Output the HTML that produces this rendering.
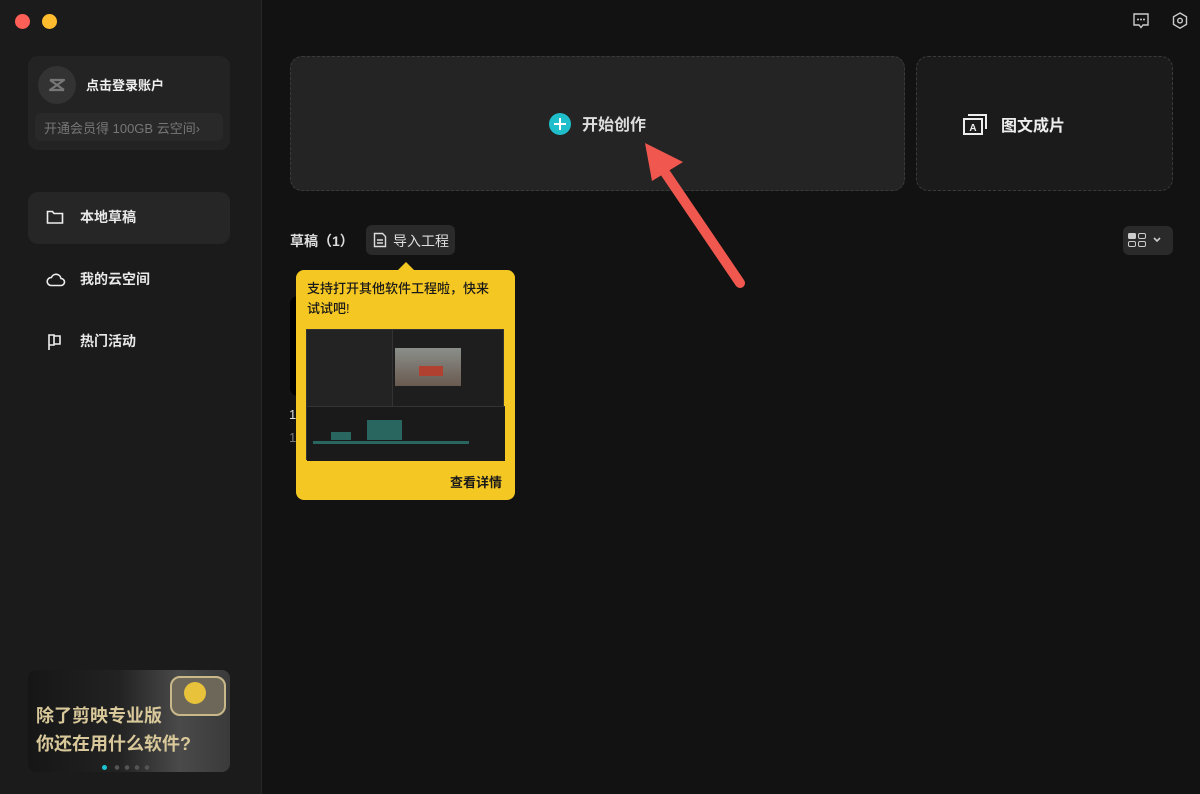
<!DOCTYPE html>
<html><head><meta charset="utf-8">
<style>
*{margin:0;padding:0;box-sizing:border-box}
body{width:1200px;height:794px;background:#121212;font-family:"Liberation Sans","Noto Sans CJK SC",sans-serif;color:#e6e6e6;position:relative;overflow:hidden}
.side{position:absolute;left:0;top:0;width:262px;height:794px;background:#1b1b1b;border-right:1px solid #262626}
.abs{position:absolute}
.dot{position:absolute;width:15px;height:15px;border-radius:50%;top:14px}
.card{position:absolute;left:28px;top:56px;width:202px;height:94px;background:#232323;border-radius:10px}
.nav{position:absolute;left:28px;width:202px;height:52px;border-radius:10px;font-size:14px;font-weight:bold;color:#e8e8e8}
.nav span{position:absolute;left:52px;top:15px}
.nav svg{position:absolute;left:18px;top:17px}
.big{position:absolute;top:56px;height:135px;background:#242424;border:1px dashed #3a3a3a;border-radius:12px;font-size:16px;font-weight:bold}
</style></head><body>
<div class="side">
  <div class="dot" style="left:15px;background:#fe5f57"></div>
  <div class="dot" style="left:42px;background:#febc2e"></div>
  <div class="card">
    <div class="abs" style="left:10px;top:10px;width:38px;height:38px;border-radius:50%;background:#333"></div>
    <svg class="abs" style="left:19px;top:21px" width="20" height="16" viewBox="0 0 20 16"><path d="M3 3h14L3 13h14M3 3l14 10" stroke="#777" stroke-width="2.2" fill="none" stroke-linejoin="round"/></svg>
    <div class="abs" style="left:58px;top:19px;font-size:13px;font-weight:bold;color:#eee">点击登录账户</div>
    <div class="abs" style="left:7px;top:57px;width:188px;height:28px;background:#292929;border-radius:6px;font-size:13px;color:#777;padding:5px 0 0 9px">开通会员得 100GB 云空间›</div>
  </div>
  <div class="nav" style="top:192px;background:#262626">
    <svg width="18" height="16" viewBox="0 0 18 16"><path d="M1.5 2.5h5l1.5 2h8.5v9.5h-15z" stroke="#eee" stroke-width="1.6" fill="none"/></svg><span>本地草稿</span></div>
  <div class="nav" style="top:254px">
    <svg width="20" height="16" viewBox="0 0 20 16"><path d="M5 14.5h10a3.5 3.5 0 0 0 0-7 5 5 0 0 0-9.6-1A4 4 0 0 0 5 14.5z" stroke="#eee" stroke-width="1.6" fill="none"/></svg><span>我的云空间</span></div>
  <div class="nav" style="top:316px">
    <svg width="18" height="18" viewBox="0 0 18 18"><path d="M3 17V2h5v10H3M8 3h6v8H8" stroke="#eee" stroke-width="1.6" fill="none"/></svg><span>热门活动</span></div>
  <div class="abs" style="left:28px;top:670px;width:202px;height:102px;border-radius:8px;background:linear-gradient(90deg,#161616 0%,#222 45%,#4a4a4a 75%,#3a3a3a 100%);overflow:hidden">
    <div class="abs" style="left:142px;top:6px;width:56px;height:40px;border:2px solid #c9b98a;border-radius:10px;background:#6d675a"></div>
    <div class="abs" style="left:156px;top:12px;width:22px;height:22px;border-radius:50%;background:#e8c23a"></div>
    <div class="abs" style="left:8px;top:32px;font-size:18px;font-weight:bold;color:#d8c89a;line-height:28px">除了剪映专业版<br>你还在用什么软件?</div>
    <div class="abs" style="left:74px;top:95px;width:5px;height:5px;border-radius:50%;background:#1cc4d0"></div>
    <div class="abs" style="left:84px;top:95px;width:40px;height:5px;background:radial-gradient(circle,#555 2px,transparent 2.5px) 0 0/10px 5px"></div>
  </div>
</div>

<svg class="abs" style="left:1132px;top:12px" width="18" height="18" viewBox="0 0 18 18"><path d="M2 2h14v11h-5l-2 2.5L7 13H2z" stroke="#ccc" stroke-width="1.4" fill="none"/><circle cx="6" cy="7.5" r="1" fill="#ccc"/><circle cx="9" cy="7.5" r="1" fill="#ccc"/><circle cx="12" cy="7.5" r="1" fill="#ccc"/></svg>
<svg class="abs" style="left:1171px;top:11px" width="18" height="20" viewBox="0 0 18 20"><path d="M9 2l6.5 3.8v7.6L9 17.2 2.5 13.4V5.8z" stroke="#ccc" stroke-width="1.4" fill="none"/><circle cx="9" cy="9.6" r="2.3" stroke="#ccc" stroke-width="1.4" fill="none"/></svg>

<div class="big" style="left:290px;width:615px">
  <div class="abs" style="left:258px;top:56px;width:22px;height:22px;border-radius:50%;background:#1ebfcb"></div>
  <div class="abs" style="left:263px;top:66px;width:12px;height:2px;background:#fff"></div>
  <div class="abs" style="left:268px;top:61px;width:2px;height:12px;background:#fff"></div>
  <div class="abs" style="left:291px;top:54px;color:#ddd">开始创作</div>
</div>
<div class="big" style="left:916px;width:257px;background:#1b1b1b">
  <svg class="abs" style="left:45px;top:56px" width="26" height="22" viewBox="0 0 26 22"><path d="M2 6h18v15H2z" stroke="#eee" stroke-width="2" fill="none"/><path d="M6 2h18v14" stroke="#eee" stroke-width="2" fill="none"/><text x="11" y="18" font-size="10" font-weight="bold" fill="#eee" text-anchor="middle" font-family="Liberation Sans">A</text></svg>
  <div class="abs" style="left:84px;top:55px;color:#eee">图文成片</div>
</div>

<svg class="abs" style="left:630px;top:135px" width="130" height="165" viewBox="630 135 130 165"><path d="M740 283L660 165" stroke="#f0574e" stroke-width="10" stroke-linecap="round"/><path d="M645 143l38 19-31 19z" fill="#f0574e"/></svg>

<div class="abs" style="left:290px;top:231px;font-size:14px;font-weight:bold;color:#ddd">草稿（1）</div>
<div class="abs" style="left:366px;top:225px;width:89px;height:30px;background:#2a2a2a;border-radius:6px;font-size:14px;color:#ddd;padding:6px 0 0 27px">导入工程</div>
<svg class="abs" style="left:373px;top:232px" width="14" height="16" viewBox="0 0 14 16"><path d="M1.5 1.5h8l3 3v10h-11z M4 8h6M4 11h6" stroke="#ddd" stroke-width="1.4" fill="none"/></svg>
<div class="abs" style="left:1123px;top:226px;width:50px;height:29px;background:#2a2a2a;border-radius:6px"></div>
<svg class="abs" style="left:1127px;top:232px" width="40" height="18" viewBox="0 0 40 18"><rect x="1" y="1" width="8" height="6" rx="1.5" fill="#ccc"/><rect x="11.5" y="1.5" width="7" height="5" rx="1.5" stroke="#ccc" fill="none"/><rect x="1.5" y="9.5" width="7" height="5" rx="1.5" stroke="#ccc" fill="none"/><rect x="11.5" y="9.5" width="7" height="5" rx="1.5" stroke="#ccc" fill="none"/><path d="M27 6l3 3 3-3" stroke="#ccc" stroke-width="1.6" fill="none"/></svg>

<div class="abs" style="left:290px;top:296px;width:20px;height:100px;background:#000;border-radius:8px"></div>
<div class="abs" style="left:289px;top:407px;font-size:13px;color:#ddd">1</div>
<div class="abs" style="left:289px;top:430px;font-size:13px;color:#777">1</div>

<div class="abs" style="left:398px;top:262px;width:0;height:0;border-left:8px solid transparent;border-right:8px solid transparent;border-bottom:8px solid #f5c722"></div>
<div class="abs" style="left:296px;top:270px;width:219px;height:230px;background:#f5c722;border-radius:8px;color:#1a1a1a">
  <div class="abs" style="left:11px;top:9px;font-size:13px;line-height:20px;width:190px;font-weight:500">支持打开其他软件工程啦，快来试试吧!</div>
  <div class="abs" style="left:10px;top:59px;width:198px;height:131px;background:#1e1e1e;border:1px solid #333">
    <div class="abs" style="left:0;top:0;width:86px;height:76px;background:#232323;border-right:1px solid #333"></div>
    <div class="abs" style="left:88px;top:18px;width:66px;height:38px;background:linear-gradient(#8a8f8a,#6a5a50)"></div>
    <div class="abs" style="left:112px;top:36px;width:24px;height:10px;background:#b04030"></div>
    <div class="abs" style="left:0;top:76px;width:198px;height:55px;background:#1a1a1a;border-top:1px solid #333"></div>
    <div class="abs" style="left:60px;top:90px;width:35px;height:20px;background:#2a6660"></div>
    <div class="abs" style="left:24px;top:102px;width:20px;height:8px;background:#2a6660"></div>
    <div class="abs" style="left:6px;top:111px;width:156px;height:3px;background:#2a6660"></div>
  </div>
  <div class="abs" style="left:154px;top:202px;font-size:13px;font-weight:bold">查看详情</div>
</div>
</body></html>
